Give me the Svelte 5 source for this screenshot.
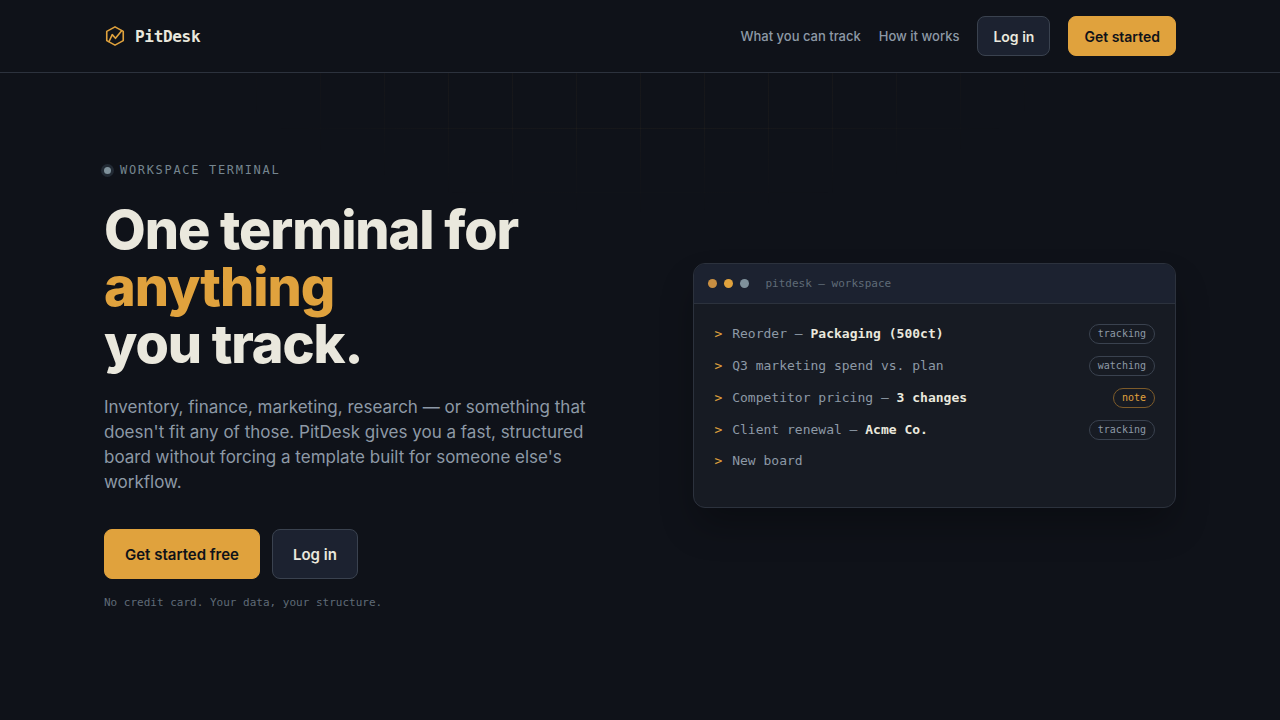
<script lang="ts">
  // Rows printed inside the terminal card.
  const rows = [
    { text: "Reorder — ", strong: "Packaging (500ct)", tag: "tracking" },
    { text: "Q3 marketing spend vs. plan", tag: "watching" },
    { text: "Competitor pricing — ", strong: "3 changes", tag: "note" },
    { text: "Client renewal — ", strong: "Acme Co.", tag: "tracking" },
    { text: "New board" },
  ];
</script>

<div class="page">
  <header>
    <div class="wrap bar">
      <a class="brand" href="#top">
        <svg viewBox="0 0 24 24" width="22" height="22" aria-hidden="true">
          <path d="M12 2 21 7v10l-9 5-9-5V7z" />
          <path d="M5.5 18 9 10.5l3.5 4L19.3 6.2" />
        </svg>
        <span>PitDesk</span>
      </a>
      <nav>
        <a href="#track">What you can track</a>
        <a href="#how">How it works</a>
        <a class="btn" href="#login">Log in</a>
        <a class="btn primary" href="#signup">Get started</a>
      </nav>
    </div>
  </header>

  <main class="wrap hero">
    <section>
      <p class="eyebrow"><span class="pulse"></span>Workspace terminal</p>
      <h1>One terminal for <em>anything</em><br />you track.</h1>
      <p class="lead">
        Inventory, finance, marketing, research — or something that doesn't fit
        any of those. PitDesk gives you a fast, structured board without forcing
        a template built for someone else's workflow.
      </p>
      <div class="actions">
        <a class="btn large primary" href="#signup">Get started free</a>
        <a class="btn large" href="#login">Log in</a>
      </div>
      <p class="fine">No credit card. Your data, your structure.</p>
    </section>

    <div class="terminal">
      <div class="titlebar">
        <div class="dots"><i></i><i></i><i></i></div>
        <span>pitdesk — workspace</span>
      </div>
      <ul>
        {#each rows as row}
          <li>
            <span class="prompt">&gt;</span>
            <span class="text">{row.text}{#if row.strong}<strong>{row.strong}</strong>{/if}</span>
            {#if row.tag}
              <span class="tag" class:note={row.tag === "note"}>{row.tag}</span>
            {/if}
          </li>
        {/each}
      </ul>
    </div>
  </main>
</div>

<style>
  :global(body) {
    margin: 0;
    background: #0f1219;
  }

  .page {
    --mono: "DejaVu Sans Mono", "Liberation Mono", monospace;
    --amber: #e0a23d;
    --cream: #eae8dd;
    --muted: #8d99a6;
    --line: #2c323d;

    position: relative;
    min-height: 100vh;
    font-family: Inter, sans-serif;
    color: var(--cream);
  }

  /* Faint grid that fades out from the top of the page. */
  .page::before {
    content: "";
    position: absolute;
    inset: 0;
    pointer-events: none;
    background-image:
      linear-gradient(rgba(224, 162, 61, 0.04) 1px, transparent 1px),
      linear-gradient(90deg, rgba(224, 162, 61, 0.04) 1px, transparent 1px);
    background-size: 64px 64px;
    mask-image: radial-gradient(ellipse 36% 30% at 50% 0%, #000 60%, transparent);
  }

  a {
    color: inherit;
    text-decoration: none;
  }

  .wrap {
    position: relative;
    box-sizing: border-box;
    max-width: 1120px;
    margin: 0 auto;
    padding: 0 24px;
  }

  header {
    position: relative;
    background: #0f1219;
    border-bottom: 1px solid var(--line);
  }

  .bar {
    display: flex;
    align-items: center;
    justify-content: space-between;
    height: 72px;
  }

  .brand {
    display: flex;
    align-items: center;
    gap: 9px;
    font: 700 16px var(--mono);
    letter-spacing: -0.02em;
  }

  .brand svg {
    fill: none;
    stroke: var(--amber);
    stroke-width: 1.75;
    stroke-linejoin: round;
    stroke-linecap: round;
  }

  nav {
    display: flex;
    align-items: center;
    gap: 18px;
    font-size: 13px;
    font-weight: 500;
    color: var(--muted);
  }

  .btn {
    box-sizing: border-box;
    display: flex;
    align-items: center;
    height: 40px;
    padding: 0 15px;
    border: 1px solid #3a424f;
    border-radius: 8px;
    background: #1c2230;
    color: var(--cream);
    font-size: 14px;
    font-weight: 600;
  }

  .btn.large {
    height: 50px;
    padding: 0 20px;
    font-size: 15px;
  }

  .btn.primary {
    border-color: var(--amber);
    background: var(--amber);
    color: #0f1219;
  }

  .hero {
    display: grid;
    grid-template-columns: 1.05fr 0.95fr;
    align-items: center;
    gap: 56px;
    padding-top: 88px;
    padding-bottom: 88px;
  }

  .eyebrow {
    display: flex;
    align-items: center;
    gap: 9px;
    margin: 0 0 22px;
    font: 12px/18px var(--mono);
    letter-spacing: 0.14em;
    text-transform: uppercase;
    color: #75858f;
  }

  .pulse {
    width: 7px;
    height: 7px;
    border-radius: 50%;
    background: #7f919b;
    box-shadow: 0 0 0 3px #222a34;
  }

  h1 {
    margin: 0 0 23px;
    font-size: 54px;
    line-height: 57px;
    font-weight: 800;
    letter-spacing: -0.02em;
  }

  h1 em {
    font-style: normal;
    color: var(--amber);
  }

  .lead {
    max-width: 490px;
    margin: 0 0 34px;
    font-size: 17px;
    line-height: 25px;
    color: var(--muted);
  }

  .actions {
    display: flex;
    gap: 12px;
  }

  .fine {
    margin: 16px 0 0;
    font: 11px/15px var(--mono);
    color: #5f6b77;
  }

  .terminal {
    overflow: hidden;
    border: 1px solid var(--line);
    border-radius: 12px;
    background: #171b23;
    box-shadow: 0 20px 36px -4px rgba(0, 0, 0, 0.3);
    font-family: var(--mono);
  }

  .titlebar {
    display: flex;
    align-items: center;
    gap: 16px;
    height: 39px;
    padding: 0 14px;
    border-bottom: 1px solid var(--line);
    background: #1c2230;
    font-size: 11px;
    color: #5f6b77;
  }

  .dots {
    display: flex;
    gap: 7px;
  }

  .dots i {
    width: 9px;
    height: 9px;
    border-radius: 50%;
    background: #7f919b;
  }

  .dots i:nth-child(1) {
    background: #c98f42;
  }

  .dots i:nth-child(2) {
    background: var(--amber);
  }

  ul {
    display: grid;
    gap: 12px;
    margin: 0;
    padding: 20px 20px 37px;
    list-style: none;
  }

  li {
    display: flex;
    align-items: center;
    gap: 10px;
    font-size: 13px;
    line-height: 18px;
    color: var(--muted);
  }

  .prompt {
    color: var(--amber);
  }

  .text {
    flex: 1;
    white-space: pre-wrap;
  }

  strong {
    font-weight: 700;
    color: var(--cream);
  }

  .tag {
    padding: 0 8px;
    border: 1px solid #3a424f;
    border-radius: 10px;
    font-size: 10px;
    line-height: 18px;
  }

  .tag.note {
    border-color: #7d5b2a;
    color: var(--amber);
  }

  @media (max-width: 860px) {
    .hero {
      grid-template-columns: 1fr;
    }
  }
</style>
